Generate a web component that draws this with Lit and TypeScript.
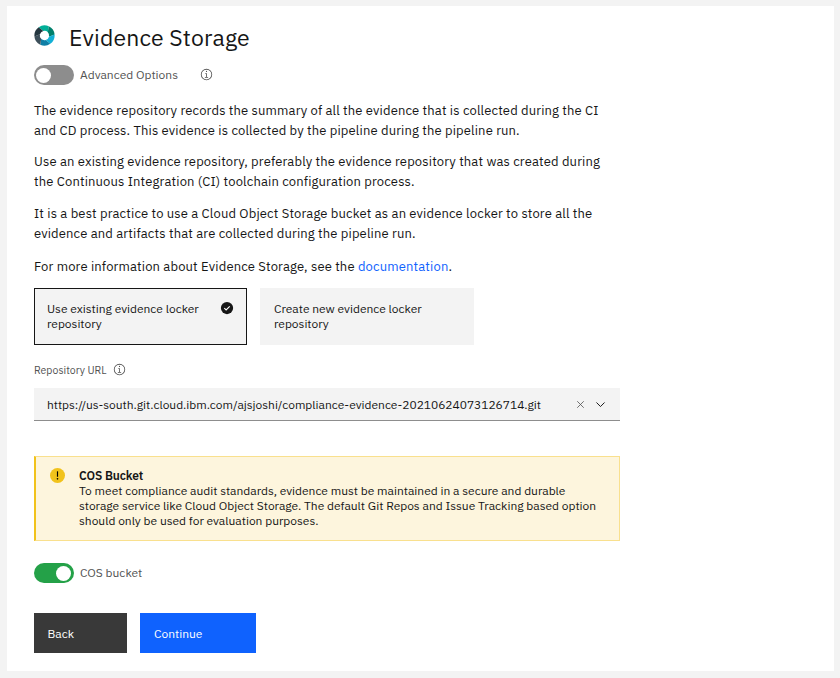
import { LitElement, html, css, svg } from "lit";
import { customElement, property, state } from "lit/decorators.js";
import { classMap } from "lit/directives/class-map.js";

const infoIcon = html`<svg class="info" viewBox="0 0 16 16" aria-hidden="true">
  <path d="M8.5 11V6.5h-2v1h1V11H6v1h4v-1zM8 3.5a.75.75 0 1 0 0 1.5.75.75 0 0 0 0-1.5z" />
  <path d="M8 15A7 7 0 1 1 8 1a7 7 0 0 1 0 14zM8 2a6 6 0 1 0 0 12A6 6 0 0 0 8 2z" />
</svg>`;

const ringColors = ["#00af98", "#00806c", "#12b0d6", "#0f7fa6", "#3d4f5a", "#24363f"];
const ringLogo = html`<svg class="logo" viewBox="0 0 22 22" aria-hidden="true">
  ${ringColors.map(
    (color, i) => svg`<path fill=${color} transform="rotate(${i * 60} 11 11)"
      d="M4.92 2.32A10.6 10.6 0 0 1 15.48 1.39L14.46 7.54A4.9 4.9 0 0 0 9.73 6.27Z" />`
  )}
</svg>`;

@customElement("toggle-switch")
class ToggleSwitch extends LitElement {
  @property({ type: Boolean }) on = false;
  @property() label = "";

  static styles = css`
    :host {
      display: flex;
      align-items: center;
      gap: 6px;
      height: 20px;
      color: #525252;
      font-size: 12px;
      line-height: 20px;
      letter-spacing: 0;
    }
    .track {
      display: flex;
      align-items: center;
      box-sizing: border-box;
      width: 40px;
      height: 20px;
      padding: 0 2px;
      border-radius: 10px;
      background: #8d8d8d;
    }
    .track.on {
      justify-content: flex-end;
      padding: 0 2.7px;
      background: #24a148;
    }
    .knob {
      width: 15px;
      height: 15px;
      border-radius: 50%;
      background: #fff;
    }
  `;

  render() {
    return html`<span class=${classMap({ track: true, on: this.on })} @click=${() => (this.on = !this.on)}>
        <span class="knob"></span>
      </span>
      <span>${this.label}</span>`;
  }
}

@customElement("app-root")
class AppRoot extends LitElement {
  @state() selected = 0;

  tiles = ["Use existing evidence locker repository", "Create new evidence locker repository"];

  static styles = css`
    :host {
      display: block;
      box-sizing: border-box;
      height: 678px;
      padding: 6px 6px 7px 7px;
      background: #f3f3f3;
      color: #161616;
      font-family: "IBM Plex Sans", Roboto, sans-serif;
      font-size: 12px;
      line-height: 15px;
      letter-spacing: -0.015px;
    }
    .card {
      box-sizing: border-box;
      height: 665px;
      padding: 15px 214px 0 27px;
      background: #fff;
    }
    header {
      display: flex;
      gap: 14px;
      height: 32px;
    }
    .logo {
      width: 21px;
      height: 21px;
      margin-top: 3.5px;
    }
    h1 {
      margin: 0;
      font-size: 23px;
      font-weight: 400;
      line-height: 32px;
      letter-spacing: 0.15px;
    }
    .advanced {
      display: flex;
      align-items: center;
      gap: 22.3px;
      margin-top: 12px;
    }
    .info {
      display: block;
      width: 13px;
      height: 13px;
      fill: #525252;
    }
    .advanced .info {
      margin-bottom: 1px;
    }
    .intro {
      display: grid;
      gap: 11px;
      margin-top: 16px;
      font-size: 13px;
      line-height: 20px;
      letter-spacing: 0.147px;
      white-space: nowrap;
    }
    .intro p {
      margin: 0;
    }
    .intro p:nth-child(n + 3) {
      margin-top: 1px;
    }
    .intro p:last-child {
      margin-top: 2px;
    }
    a {
      color: #0f62fe;
      text-decoration: none;
    }
    .tiles {
      display: flex;
      gap: 13px;
      margin-top: 11px;
    }
    .tile {
      display: flex;
      justify-content: space-between;
      box-sizing: border-box;
      width: 213px;
      height: 57px;
      padding: 12px;
      border: 1px solid #f3f3f3;
      background: #f3f3f3;
    }
    .tile + .tile {
      width: 214px;
      padding-left: 13px;
    }
    .tile.selected {
      border-color: #161616;
    }
    .tile span {
      width: 160px;
    }
    .check {
      width: 14px;
      height: 14px;
    }
    .field-label {
      display: flex;
      align-items: center;
      gap: 6.4px;
      height: 14px;
      margin: 18px 0 11px;
      color: #525252;
      font-size: 10.5px;
      letter-spacing: 0.02px;
    }
    .field-label .info {
      margin-bottom: 1px;
    }
    .select {
      display: flex;
      align-items: center;
      box-sizing: border-box;
      height: 33px;
      padding: 0 13px;
      border-bottom: 1px solid #8d8d8d;
      background: #f3f3f3;
    }
    .url {
      flex: 1;
      letter-spacing: -0.02px;
    }
    .clear,
    .chevron {
      width: 13px;
      height: 13px;
      fill: none;
      stroke: #525252;
    }
    .clear {
      margin-right: 7px;
    }
    .chevron {
      stroke: #161616;
    }
    .notice {
      display: flex;
      gap: 14px;
      box-sizing: border-box;
      height: 85px;
      margin: 35px 0 22px;
      padding: 11px 13px 11px 14px;
      border: 1px solid #f9e08e;
      border-left: 2px solid #f1c21b;
      background: #fdf5dd;
    }
    .warning {
      flex: none;
      width: 15px;
      height: 15px;
    }
    .notice div {
      flex: 1;
      white-space: nowrap;
    }
    strong {
      display: block;
      font-weight: 600;
      letter-spacing: -0.08px;
    }
    .actions {
      display: flex;
      gap: 13px;
      margin-top: 30px;
    }
    button {
      width: 93px;
      height: 40px;
      padding: 0 13.5px;
      border: 0;
      background: #393939;
      color: #fff;
      font: inherit;
      letter-spacing: inherit;
      text-align: left;
    }
    .primary {
      width: 116px;
      padding-left: 14px;
      background: #0f62fe;
    }
  `;

  render() {
    return html`<main class="card">
      <header>${ringLogo}<h1>Evidence Storage</h1></header>
      <div class="advanced"><toggle-switch label="Advanced Options"></toggle-switch>${infoIcon}</div>
      <section class="intro">
        <p>The evidence repository records the summary of all the evidence that is collected during the CI<br />and CD process. This evidence is collected by the pipeline during the pipeline run.</p>
        <p>Use an existing evidence repository, preferably the evidence repository that was created during<br />the Continuous Integration (CI) toolchain configuration process.</p>
        <p>It is a best practice to use a Cloud Object Storage bucket as an evidence locker to store all the<br />evidence and artifacts that are collected during the pipeline run.</p>
        <p>For more information about Evidence Storage, see the <a>documentation</a>.</p>
      </section>
      <div class="tiles">
        ${this.tiles.map(
          (text, i) => html`<div class=${classMap({ tile: true, selected: i === this.selected })} @click=${() => (this.selected = i)}>
            <span>${text}</span>
            ${i === this.selected
              ? html`<svg class="check" viewBox="0 0 16 16" aria-hidden="true">
                  <circle cx="8" cy="8" r="7" fill="#161616" />
                  <path d="M4.9 8.1 7 10.2l4.1-4.1" fill="none" stroke="#fff" stroke-width="1.3" />
                </svg>`
              : ""}
          </div>`
        )}
      </div>
      <div class="field-label"><span>Repository URL</span>${infoIcon}</div>
      <div class="select">
        <span class="url">https://us-south.git.cloud.ibm.com/ajsjoshi/compliance-evidence-20210624073126714.git</span>
        <svg class="clear" viewBox="0 0 16 16" aria-hidden="true"><path d="m4 4 8 8m0-8-8 8" /></svg>
        <svg class="chevron" viewBox="0 0 16 16" aria-hidden="true"><path d="m3 5.5 5 5 5-5" stroke-width="1.2" /></svg>
      </div>
      <section class="notice">
        <svg class="warning" viewBox="0 0 18 18" aria-hidden="true">
          <circle cx="9" cy="9" r="9" fill="#f1c21b" />
          <path d="M8.3 4h1.4v6.5H8.3z" />
          <circle cx="9" cy="13" r="1" />
        </svg>
        <div>
          <strong>COS Bucket</strong>
          To meet compliance audit standards, evidence must be maintained in a secure and durable<br />storage service like Cloud Object Storage. The default Git Repos and Issue Tracking based option<br />should only be used for evaluation purposes.
        </div>
      </section>
      <toggle-switch on label="COS bucket"></toggle-switch>
      <div class="actions"><button>Back</button><button class="primary">Continue</button></div>
    </main>`;
  }
}
